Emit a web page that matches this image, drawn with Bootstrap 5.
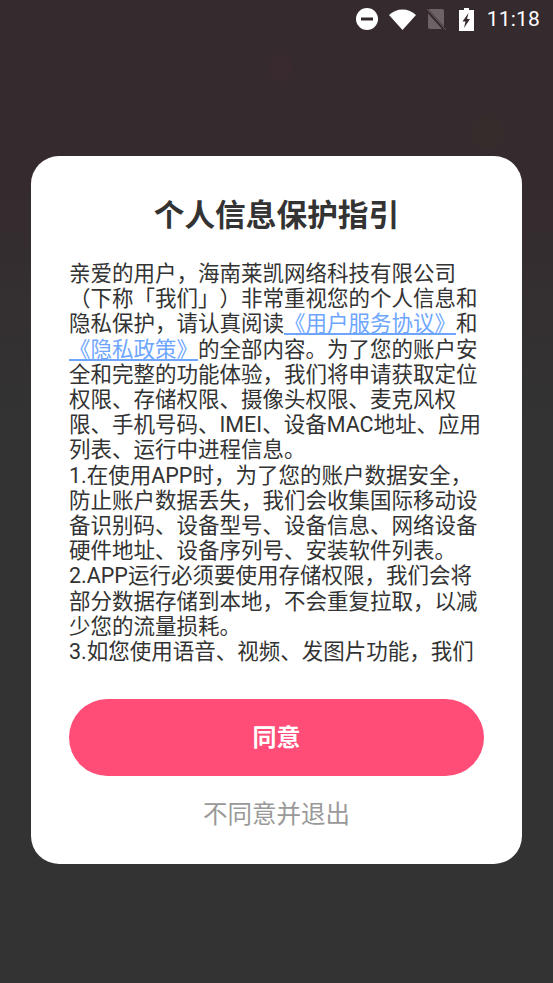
<!DOCTYPE html>
<html lang="zh-CN">
<head>
<meta charset="utf-8">
<title>个人信息保护指引</title>
<link href="https://cdn.jsdelivr.net/npm/bootstrap@5.3.0/dist/css/bootstrap.min.css" rel="stylesheet">
<style>
html,body{height:100%;margin:0}
body{font-family:Roboto,"Noto Sans CJK SC",sans-serif;overflow:hidden;text-spacing-trim:space-all;font-feature-settings:"chws" 0,"palt" 0;
 background:
  radial-gradient(circle 15px at 281px 67px,#382a2e 0 70%,transparent 100%),
  radial-gradient(circle 20px at 487px 133px,#362c2c 0 70%,transparent 100%),
  linear-gradient(180deg,#352a2e 0,#352a2e 160px,#333 420px,#333 100%);}
.statusline{height:38px;padding-right:13px;color:#fff}
.ic-circle{margin-right:11px}
.ic-wifi{margin-right:10px}
.ic-sim{margin-right:13px}
.clock{font-size:21px;line-height:38px;letter-spacing:.2px;margin-left:13px}
.sheet{width:491px;height:708px;margin:118px 0 0 31px;border-radius:28px;padding:0 38px}
.sheet-title{font-size:30.7px;font-weight:700;line-height:40px;margin:40px 0 0;color:#333;font-family:inherit}
.sheet-body{height:402px;margin-top:25px;overflow:hidden;font-size:21.5px;line-height:25.2px;color:#333;width:415px}
.sheet-body a{color:#6ea6ff;text-decoration:underline;text-decoration-thickness:1.5px;text-underline-offset:2px}
.agree{width:415px;height:77px;margin-top:36px;border:0;border-radius:39px;background:#ff4d78;color:#fff;font-size:24px;font-weight:700}
.agree:hover,.agree:active{background:#ff4d78!important;color:#fff!important}
.refuse{font-size:24.5px;line-height:32px;color:#999;margin-top:23px;border:0;padding:0;background:none}
</style>
</head>
<body>
<div class="statusline d-flex justify-content-end align-items-center">
 <svg width="22" height="22" viewBox="0 0 22 22" class="ic-circle"><circle cx="11" cy="11" r="11" fill="#fff"/><rect x="5" y="9.500" width="12" height="3" fill="#33282c"/></svg>
 <svg width="27" height="21" viewBox="0 0 27 21" class="ic-wifi"><path d="M0 6C3.500 2.500 8.500 .5 13.500 .5S23.500 2.500 27 6L13.500 21Z" fill="#fff"/></svg>
 <svg width="20" height="22" viewBox="0 0 20 22" class="ic-sim"><rect x="2" y="1" width="16" height="20" rx="2" fill="#6d6266"/><path d="M0 1l19 21" stroke="#33282c" stroke-width="3"/><path d="M1 1l19 21" stroke="#6d6266" stroke-width="1"/></svg>
 <svg width="15" height="23" viewBox="0 0 15 23" class="ic-batt"><path fill-rule="evenodd" d="M5 0h5v2h5v21H0V2h5ZM9.500 5 3.500 13.500h3L5 20l6-9H8Z" fill="#fff"/></svg>
 <span class="clock">11:18</span>
</div>
<main class="sheet bg-white d-flex flex-column align-items-center">
 <h1 class="sheet-title text-center">个人信息保护指引</h1>
 <div class="sheet-body">亲爱的用户，海南莱凯网络科技有限公司（下称「我们」）非常重视您的个人信息和隐私保护，请认真阅读<a href="#">《用户服务协议》</a>和<a href="#">《隐私政策》</a>的全部内容。为了您的账户安全和完整的功能体验，我们将申请获取定位权限、存储权限、摄像头权限、麦克风权限、手机号码、IMEI、设备MAC地址、应用列表、运行中进程信息。<br>1.在使用APP时，为了您的账户数据安全，防止账户数据丢失，我们会收集国际移动设备识别码、设备型号、设备信息、网络设备硬件地址、设备序列号、安装软件列表。<br>2.APP运行必须要使用存储权限，我们会将部分数据存储到本地，不会重复拉取，以减少您的流量损耗。<br>3.如您使用语音、视频、发图片功能，我们</div>
 <button type="button" class="btn agree">同意</button>
 <button type="button" class="btn refuse">不同意并退出</button>
</main>
<script src="https://cdn.jsdelivr.net/npm/bootstrap@5.3.0/dist/js/bootstrap.bundle.min.js"></script>
</body>
</html>
